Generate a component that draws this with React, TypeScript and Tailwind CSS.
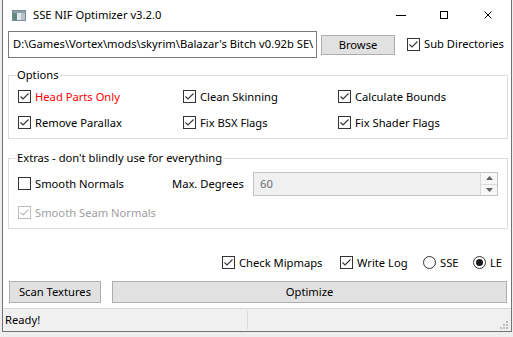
import React from 'react';

const font = { fontFamily: '"Noto Sans", "Open Sans", sans-serif' };

function CheckBox({ checked, disabled }: { checked?: boolean; disabled?: boolean }) {
  const c = disabled ? '#bcbcbc' : '#333333';
  return (
    <svg width="13" height="13" viewBox="0 0 13 13" className="shrink-0">
      <rect x="0.5" y="0.5" width="12" height="12" fill="#ffffff" stroke={c} />
      {checked && <path d="M2.5 6.5 L5 9 L10.5 3.5" fill="none" stroke={c} strokeWidth="1.1" />}
    </svg>
  );
}

function Radio({ checked }: { checked?: boolean }) {
  return (
    <svg width="13" height="13" viewBox="0 0 13 13" className="shrink-0">
      <circle cx="6.5" cy="6.5" r="6" fill="#ffffff" stroke="#333333" />
      {checked && <circle cx="6.5" cy="6.5" r="3.5" fill="#1a1a1a" />}
    </svg>
  );
}

function Check({ label, checked, red, disabled }: { label: string; checked?: boolean; red?: boolean; disabled?: boolean }) {
  return (
    <div className="flex items-center gap-[4px]">
      <CheckBox checked={checked} disabled={disabled} />
      <span className={red ? 'text-[#ff0000]' : disabled ? 'text-[#a0a0a0]' : 'text-black'}>{label}</span>
    </div>
  );
}

function Group({ title, className, children }: { title: string; className: string; children: React.ReactNode }) {
  return (
    <div className={`relative ml-[5px] w-[500px] border border-[#dcdcdc] ${className}`}>
      <span className="absolute -top-[9px] left-[7px] bg-white px-[1px] leading-[16px]">{title}</span>
      {children}
    </div>
  );
}

export default function App() {
  return (
    <div className="w-[513px] h-[337px] bg-[#eeeeee] text-[11.2px] text-black overflow-hidden" style={font}>
      <div className="ml-[2px] w-[510px] h-[332px] bg-white border-l border-r border-b border-[#737373] flex flex-col">
        {/* title bar */}
        <div className="h-[30px] flex items-center shrink-0">
          <svg width="14" height="11" viewBox="0 0 14 11" className="ml-[9px] mr-[7px]">
            <rect x="0.5" y="0.5" width="13" height="10" fill="#dfe5ea" stroke="#7d8a96" />
            <rect x="1" y="1" width="12" height="2" fill="#8fa0ae" />
            <rect x="1" y="3" width="4" height="7" fill="#5f8a7a" />
            <rect x="9" y="3" width="4" height="7" fill="#b8c2ca" />
          </svg>
          <span className="leading-none">SSE NIF Optimizer v3.2.0</span>
          <div className="ml-auto flex items-center h-full">
            <div className="w-[44px] h-full flex items-center justify-center">
              <div className="w-[10px] h-px bg-black" />
            </div>
            <div className="w-[44px] h-full flex items-center justify-center">
              <div className="w-[8px] h-[8px] border border-black -ml-[2px]" />
            </div>
            <div className="w-[44px] h-full flex items-center justify-center">
              <svg width="8" height="8" viewBox="0 0 8 8" className="-ml-[3px]">
                <path d="M0.5 0.5 L7.5 7.5 M7.5 0.5 L0.5 7.5" stroke="#000" strokeWidth="1" />
              </svg>
            </div>
          </div>
        </div>

        {/* path row */}
        <div className="mt-[1px] h-[27px] flex items-center shrink-0">
          <div className="ml-[5px] w-[309px] h-[27px] border border-[#7a7a7a] flex items-center overflow-hidden whitespace-nowrap pl-[4px]">
            D:\Games\Vortex\mods\skyrim\Balazar's Bitch v0.92b SE\
          </div>
          <button className="ml-[4px] w-[74px] h-[20px] bg-[#e1e1e1] border border-[#adadad] leading-none">Browse</button>
          <div className="ml-[12px]">
            <Check label="Sub Directories" checked />
          </div>
        </div>

        {/* options */}
        <Group title="Options" className="mt-[17px] h-[64px] shrink-0">
          <div className="pt-[8px] pl-[9px] grid grid-cols-[165px_155px_1fr] auto-rows-[26px] items-center">
            <Check label="Head Parts Only" checked red />
            <Check label="Clean Skinning" checked />
            <Check label="Calculate Bounds" checked />
            <Check label="Remove Parallax" checked />
            <Check label="Fix BSX Flags" checked />
            <Check label="Fix Shader Flags" checked />
          </div>
        </Group>

        {/* extras */}
        <Group title="Extras - don't blindly use for everything" className="mt-[19px] h-[71px] shrink-0">
          <div className="pt-[13px] pl-[9px]">
            <div className="h-[24px] flex items-center">
              <div className="w-[154px]">
                <Check label="Smooth Normals" />
              </div>
              <span className="w-[81px]">Max. Degrees</span>
              <div className="w-[245px] h-[24px] bg-[#f0f0f0] border border-[#c4c4c4] flex items-center">
                <span className="pl-[6px] text-[#6d6d6d]">60</span>
                <div className="ml-auto w-[17px] h-full flex flex-col border-l border-[#dadada]">
                  <div className="flex-1 flex items-center justify-center bg-[#f7f7f7] border-b border-[#dadada]">
                    <svg width="7" height="4" viewBox="0 0 7 4"><path d="M0 4 L3.5 0 L7 4 Z" fill="#606060" /></svg>
                  </div>
                  <div className="flex-1 flex items-center justify-center bg-[#f7f7f7]">
                    <svg width="7" height="4" viewBox="0 0 7 4"><path d="M0 0 L3.5 4 L7 0 Z" fill="#606060" /></svg>
                  </div>
                </div>
              </div>
            </div>
            <div className="mt-[7px] h-[20px] flex items-center">
              <Check label="Smooth Seam Normals" checked disabled />
            </div>
          </div>
        </Group>

        {/* bottom options */}
        <div className="mt-[24px] h-[20px] flex items-center pl-[219px] shrink-0">
          <div className="w-[118px]"><Check label="Check Mipmaps" checked /></div>
          <div className="w-[83px]"><Check label="Write Log" checked /></div>
          <div className="w-[50px] flex items-center gap-[4px]"><Radio /><span>SSE</span></div>
          <div className="flex items-center gap-[4px]"><Radio checked /><span>LE</span></div>
        </div>

        {/* buttons */}
        <div className="mt-[8px] h-[22px] flex items-center shrink-0">
          <button className="ml-[6px] w-[92px] h-[22px] bg-[#e1e1e1] border border-[#adadad] leading-none">Scan Textures</button>
          <button className="ml-[11px] w-[395px] h-[22px] bg-[#e1e1e1] border border-[#adadad] leading-none">Optimize</button>
        </div>

        {/* status bar */}
        <div className="mt-[5px] flex-1 bg-[#f0f0f0] border-t border-[#d7d7d7] flex items-center relative">
          <span className="w-[244px] pl-[2px]">Ready!</span>
          <div className="self-stretch w-px bg-[#dadada] my-[2px]" />
          <svg width="10" height="10" viewBox="0 0 10 10" className="absolute right-[2px] bottom-[1px]">
            <g fill="#bdbdbd">
              <rect x="7" y="1" width="2" height="2" />
              <rect x="4" y="4" width="2" height="2" />
              <rect x="7" y="4" width="2" height="2" />
              <rect x="1" y="7" width="2" height="2" />
              <rect x="4" y="7" width="2" height="2" />
              <rect x="7" y="7" width="2" height="2" />
            </g>
          </svg>
        </div>
      </div>
    </div>
  );
}
